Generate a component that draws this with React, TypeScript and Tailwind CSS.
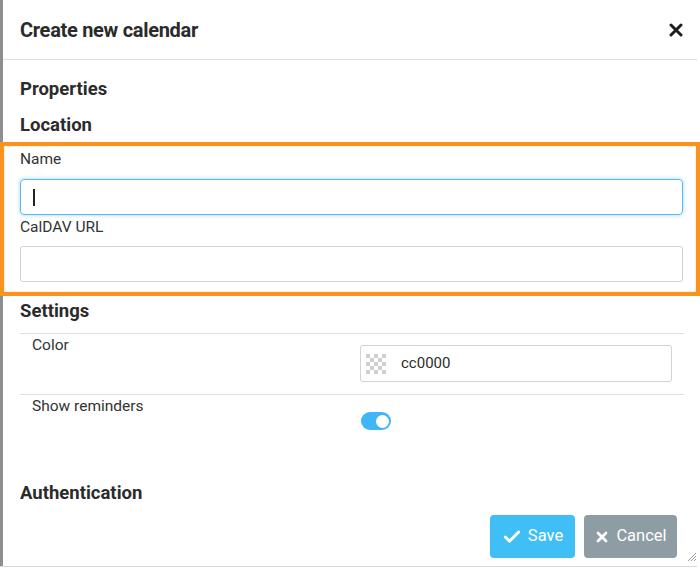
import { Check, X } from 'lucide-react';

const font = { fontFamily: 'Roboto, "Liberation Sans", sans-serif' };

const Checker = () => (
  <svg width="20" height="20" viewBox="0 0 20 20">
    {Array.from({ length: 25 }).map((_, i) => {
      const r = Math.floor(i / 5);
      const c = i % 5;
      return (
        <rect
          key={i}
          x={c * 4}
          y={r * 4}
          width="4"
          height="4"
          fill={(r + c) % 2 === 0 ? '#cfcfcf' : '#ffffff'}
        />
      );
    })}
  </svg>
);

export default function App() {
  return (
    <div className="w-[700px] h-[571px] bg-white text-[#2b2b2b]" style={font}>
      <div className="h-[566px] w-[697px] border-l-[3px] border-[#8e8e8e] flex flex-col">
        {/* header */}
        <div className="h-[60px] flex items-center justify-between pl-[17px] pr-[14px] border-b border-[#dedede]">
          <h1 className="text-[20px] font-bold tracking-[-0.3px]">Create new calendar</h1>
          <svg width="14" height="14" viewBox="0 0 14 14">
            <path d="M2 2 L12 12 M12 2 L2 12" stroke="#1f1f1f" strokeWidth="3" strokeLinecap="round" />
          </svg>
        </div>

        <div className="pl-[17px] mt-[17px] text-[18.5px] font-bold leading-[24px]">Properties</div>
        <div className="pl-[17px] mt-[12px] text-[18.5px] font-bold leading-[24px]">Location</div>

        {/* highlighted location block */}
        <div className="-ml-[3px] mt-[5px] w-[700px] border-[4px] border-[#f7931e] pl-[16px] pr-[13px] pt-[3px] pb-[10px] shadow-[inset_0_0_2px_#fbc98a]">
          <div className="text-[15.5px] leading-[20px] text-[#333]">Name</div>
          <div className="mt-[10px] h-[36px] rounded-[4px] border border-[#5bb8ec] shadow-[0_0_4px_#9fd6f6] flex items-center pl-[12px]">
            <span className="w-[1.5px] h-[17px] bg-[#222]" />
          </div>
          <div className="mt-[2px] text-[15.5px] leading-[20px] text-[#333]">CalDAV URL</div>
          <div className="mt-[9px] h-[36px] rounded-[3px] border border-[#d3d3d3]" />
        </div>

        {/* settings */}
        <div className="pl-[17px] mt-[3px] text-[18.5px] font-bold leading-[24px]">Settings</div>
        <div className="ml-[17px] w-[664px] mt-[10px] border-t border-[#e0e0e0]">
          <div className="flex items-start px-[12px] pt-[1px] pb-[12px] border-b border-[#e0e0e0]">
            <div className="w-[328px] text-[15.5px] leading-[20px] text-[#333]">Color</div>
            <div className="mt-[10px] flex-1 h-[37px] rounded-[3px] border border-[#d3d3d3] flex items-center pl-[5px] gap-[15px]">
              <Checker />
              <span className="text-[15px] text-[#2b2b2b]">cc0000</span>
            </div>
          </div>
          <div className="flex items-start px-[12px] pt-[1px]">
            <div className="w-[329px] text-[15.5px] leading-[20px] text-[#333]">Show reminders</div>
            <div className="mt-[16px] w-[30px] h-[18px] rounded-full bg-[#3fb6f5] flex items-center justify-end pr-[2px]">
              <span className="w-[13px] h-[13px] rounded-full bg-white" />
            </div>
          </div>
        </div>

        <div className="pl-[17px] mt-[51px] text-[18.5px] font-bold leading-[24px]">Authentication</div>

        {/* footer */}
        <div className="mt-[10px] flex items-end justify-end">
          <div className="flex gap-[9px]">
            <button className="w-[85px] h-[43px] rounded-[4px] bg-[#40bff6] text-white text-[16.5px] flex items-center justify-center gap-[6px]">
              <Check size={20} strokeWidth={3.5} />
              Save
            </button>
            <button className="w-[93px] h-[43px] rounded-[4px] bg-[#8e9da3] text-white text-[16.5px] flex items-center justify-center gap-[6px]">
              <X size={16} strokeWidth={4} />
              Cancel
            </button>
          </div>
          <svg width="10" height="10" viewBox="0 0 10 10" className="ml-[10px] mb-[-4px]">
            <path d="M9 1 L1 9 M9 4 L4 9 M9 7 L7 9" stroke="#9a9a9a" strokeWidth="1" />
          </svg>
        </div>
      </div>
      <div className="h-[1px] w-[697px] bg-[#d9d9d9]" />
    </div>
  );
}
